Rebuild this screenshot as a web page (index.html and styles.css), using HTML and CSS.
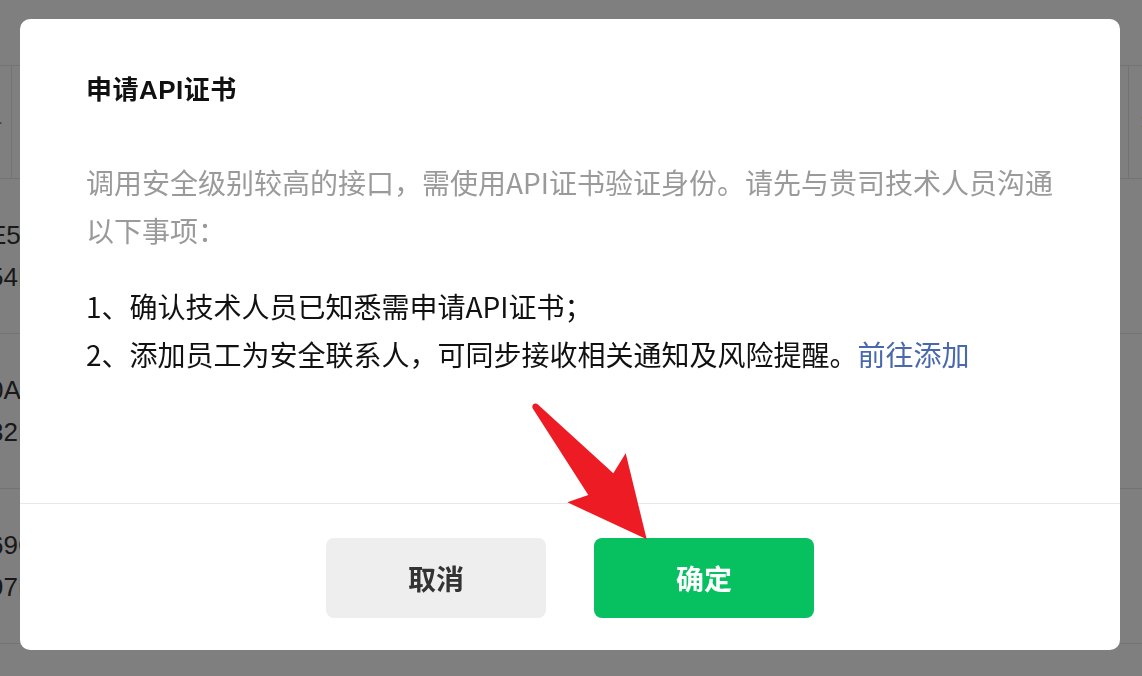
FILE: index.html
```html
<!DOCTYPE html>
<html lang="zh-CN">
<head>
<meta charset="utf-8">
<title>申请API证书</title>
<link rel="stylesheet" href="styles.css">
</head>
<body>
<div class="page">
  <div class="table">
    <div class="thead">
      <div class="th th-first">证书序列号</div>
      <div class="th th-mid">申请时间</div>
      <div class="th th-last">操作</div>
    </div>
    <div class="tr"><div class="td"><span>E5A7C2F08B3D</span><span>54D19E3A6C21</span></div></div>
    <div class="tr"><div class="td"><span>0A0F6B2C97E4</span><span>32E8D5A1B07F</span></div></div>
    <div class="tr"><div class="td"><span>69C3A8E2F15D</span><span>97B4D0E6A2C8</span></div></div>
    <div class="tr"><div class="td"><span>A2F7C9B1E3D5</span><span>18E6A0D4C7B2</span></div></div>
  </div>
</div>

<div class="mask">
  <div class="dialog">
    <div class="dialog-body">
      <h2 class="dialog-title">申请API证书</h2>
      <p class="dialog-desc">调用安全级别较高的接口，需使用API证书验证身份。请先与贵司技术人员沟通以下事项：</p>
      <ol class="dialog-list">
        <li>1、确认技术人员已知悉需申请API证书；</li>
        <li>2、添加员工为安全联系人，可同步接收相关通知及风险提醒。<a class="link" href="#">前往添加</a></li>
      </ol>
    </div>
    <div class="dialog-foot">
      <button class="btn btn-cancel" type="button">取消</button>
      <button class="btn btn-primary" type="button">确定</button>
    </div>
  </div>
</div>

<svg class="annot" width="1142" height="676" viewBox="0 0 1142 676" aria-hidden="true">
  <path d="M532.6,408.2 C531.2,404.6 535.2,401.4 539,405.6 L613.3,473.3 L625.7,453.3 L646.7,539.3 L567.3,502.3 L588.3,495 Z" fill="#ed1c24"/>
</svg>
</body>
</html>
```

FILE: styles.css
```css
html, body {
  margin: 0;
  padding: 0;
}

body {
  width: 1142px;
  height: 676px;
  overflow: hidden;
  background: #ffffff;
  font-family: "Noto Sans CJK SC", "Noto Sans", sans-serif;
}

/* background page (table) */
.page {
  width: 1142px;
  height: 676px;
  overflow: hidden;
}

.table {
  margin-left: -200px;
  width: 1542px;
  padding-top: 65px;
  font-family: "Liberation Sans", "Noto Sans CJK SC", sans-serif;
  color: #333333;
}

.thead {
  display: flex;
  height: 112px;
  border-top: 1px solid #e7e7e7;
  border-bottom: 1px solid #e7e7e7;
}

.th {
  display: flex;
  align-items: center;
  font-size: 24px;
  color: #8a8a8a;
  font-family: "Noto Sans CJK SC", sans-serif;
}

.th-first {
  width: 212px;
  justify-content: flex-end;
  padding-right: 8px;
  box-sizing: border-box;
  border-right: 1px solid #e7e7e7;
  white-space: nowrap;
}

.th-mid {
  flex: 1;
  padding-left: 20px;
}

.th-last {
  width: 214px;
  padding-left: 12px;
  box-sizing: border-box;
  border-left: 1px solid #e7e7e7;
  color: #555555;
}

.tr {
  height: 154px;
  border-bottom: 1px solid #e7e7e7;
  display: flex;
}

.td {
  display: flex;
  flex-direction: column;
  justify-content: center;
  padding-left: 189px;
  font-size: 26px;
  line-height: 42px;
}

/* mask + dialog */
.mask {
  position: fixed;
  inset: 0;
  background: rgba(0, 0, 0, 0.5);
  display: flex;
  align-items: flex-start;
  padding: 19px 0 0 20px;
}

.dialog {
  width: 1100px;
  background: #ffffff;
  border-radius: 10px;
  overflow: hidden;
}

.dialog-body {
  padding: 54px 60px 125px 66px;
}

.dialog-title {
  margin: 0;
  font-family: "Liberation Sans", "Noto Sans CJK SC", sans-serif;
  font-size: 26px;
  letter-spacing: 0.5px;
  line-height: 34px;
  font-weight: 700;
  color: #111111;
}

.dialog-desc {
  margin: 51px 0 0;
  font-size: 28px;
  line-height: 48px;
  color: #9a9a9a;
}

.dialog-list {
  list-style: none;
  margin: 28px 0 0;
  padding: 0;
  font-size: 28px;
  line-height: 48px;
  color: #111111;
}

.link {
  color: #4a69ad;
  text-decoration: none;
}

.dialog-foot {
  border-top: 1px solid #e8e8e8;
  padding: 34px 0 32px;
  display: flex;
  justify-content: center;
  gap: 48px;
}

.btn {
  width: 220px;
  height: 80px;
  border: none;
  border-radius: 8px;
  font-family: "Noto Sans CJK SC", sans-serif;
  font-size: 28px;
  font-weight: 700;
  padding: 0;
}

.btn-cancel {
  background: #eeeeee;
  color: #333333;
}

.btn-primary {
  background: #07c160;
  color: #ffffff;
}

.annot {
  position: fixed;
  left: 0;
  top: 0;
  pointer-events: none;
}
```
